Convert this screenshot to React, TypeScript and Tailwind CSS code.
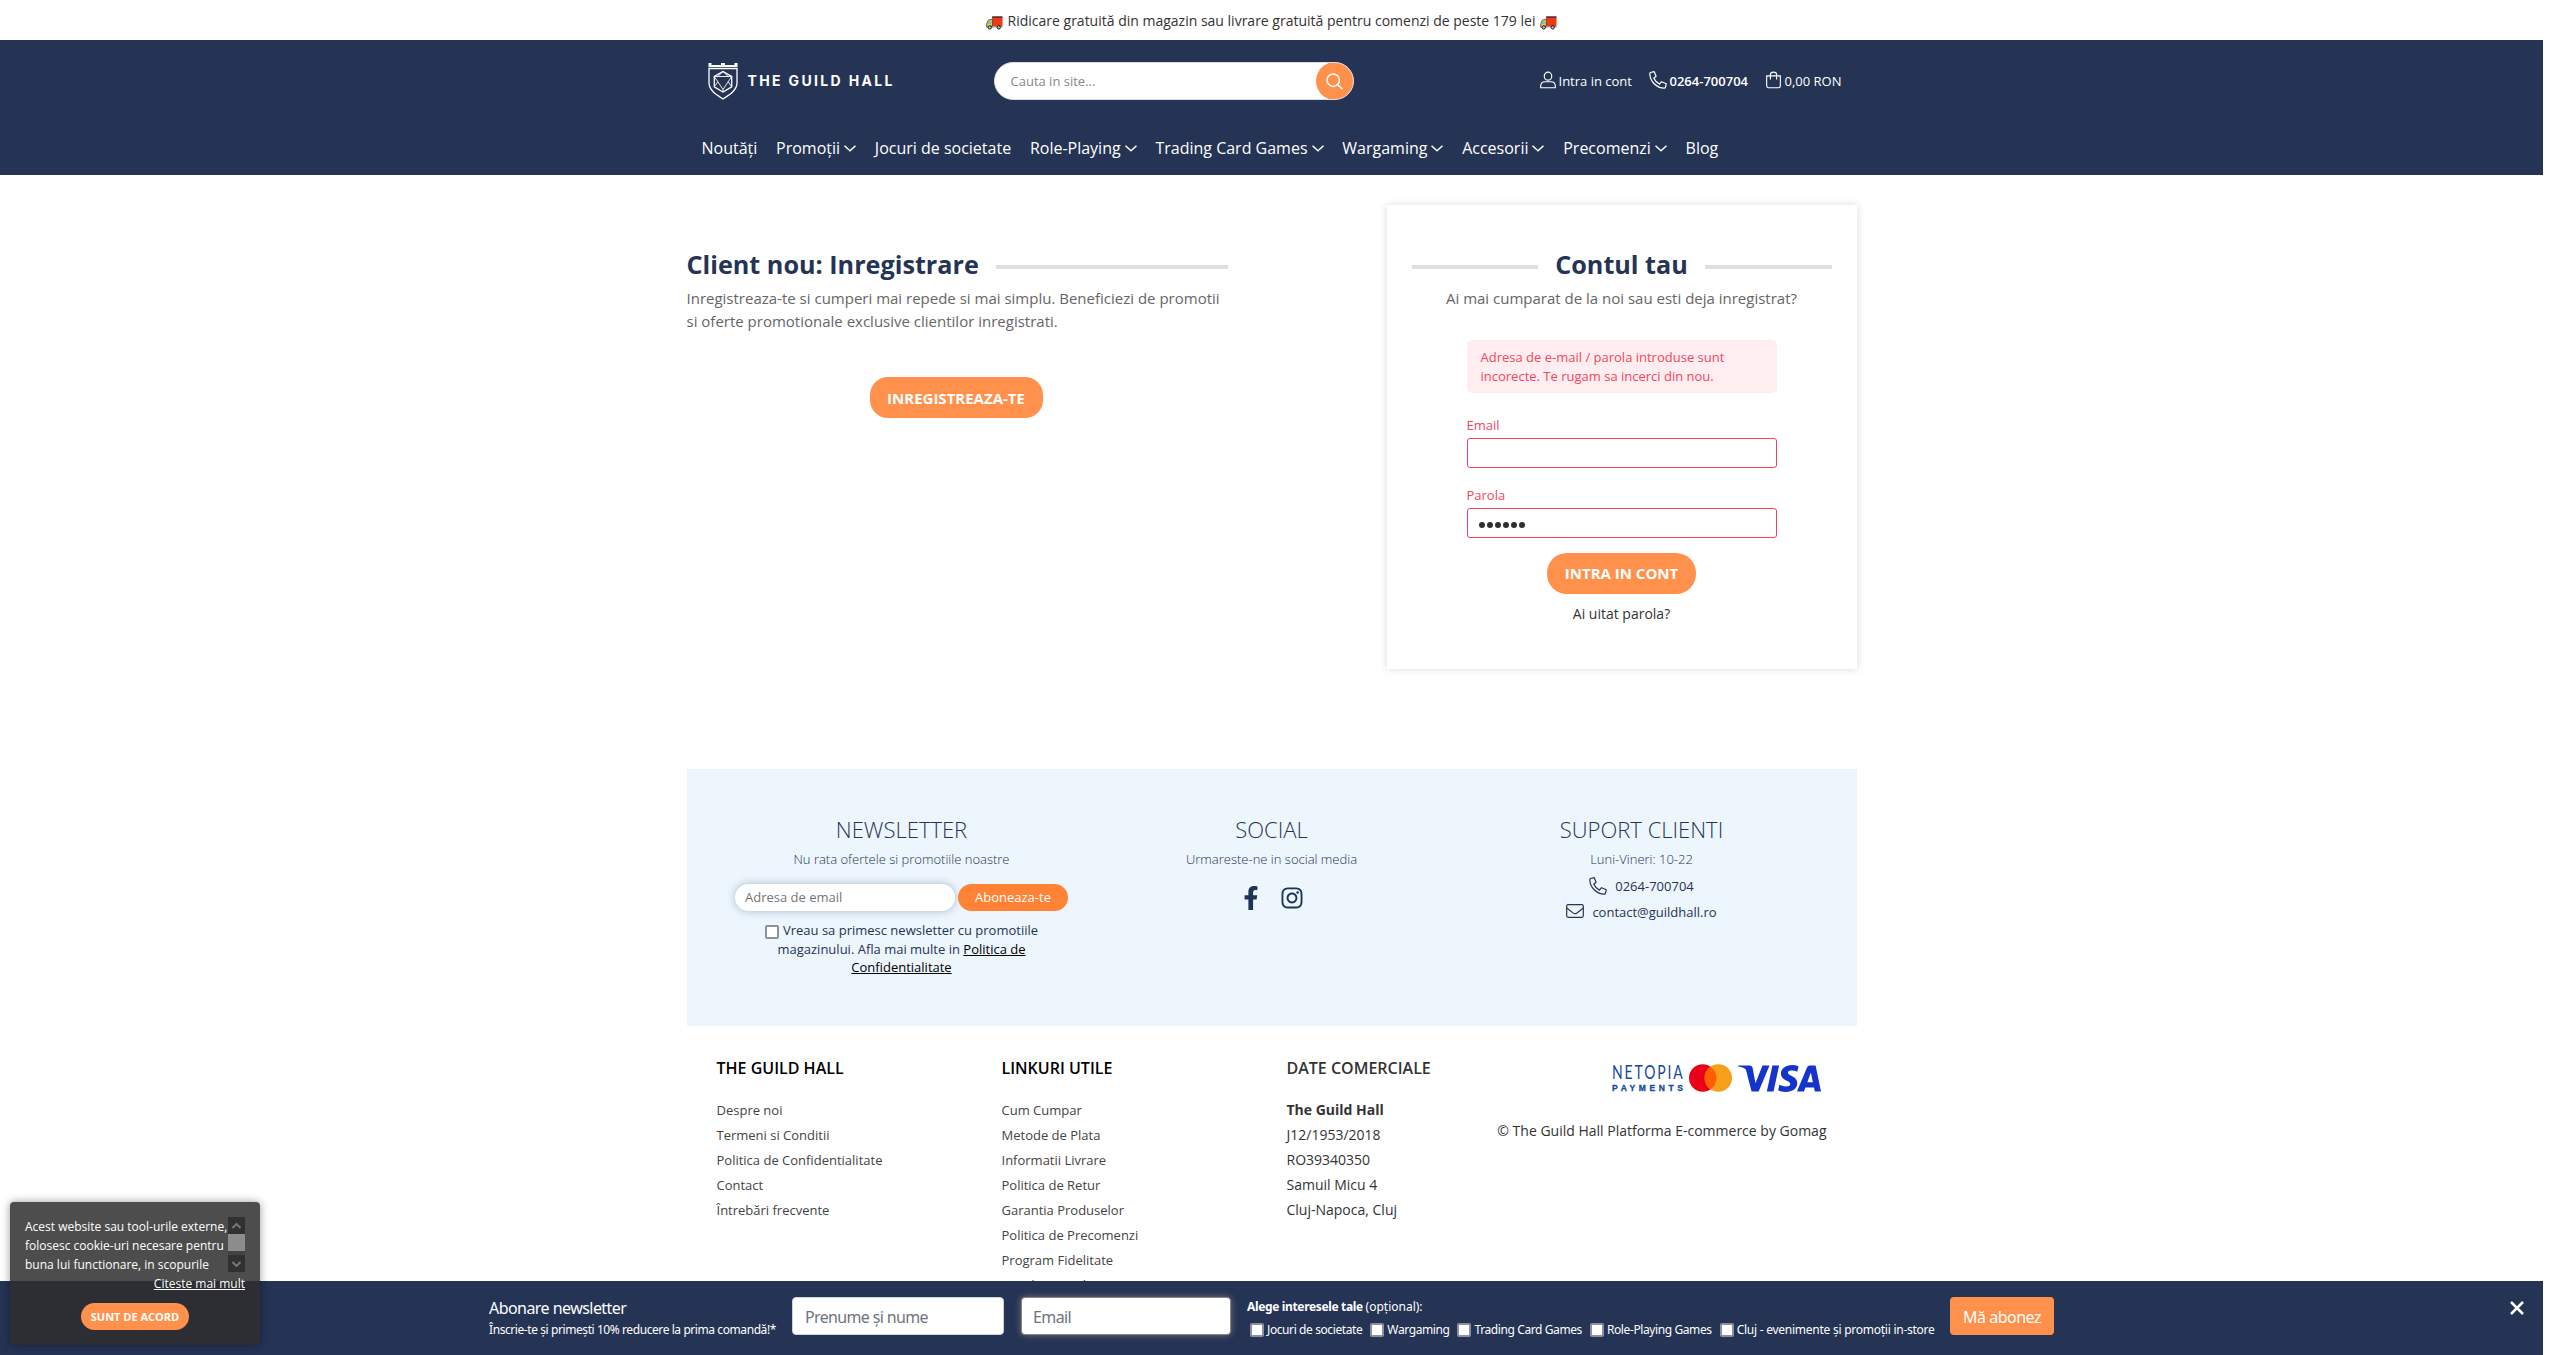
import React from "react";
import { FaFacebookF, FaInstagram } from "react-icons/fa";
import { SiVisa } from "react-icons/si";

const Truck = () => (
  <svg width="17" height="14" viewBox="0 0 18 14" className="mt-1 shrink-0">
    <path d="M6.500 0.600h11v9.900h-11z" fill="#f03a17" />
    <path d="M6.500 0.600h11" stroke="#111" strokeWidth="1.200" />
    <path d="M6 3L2.400 4 0.700 8v3.300h6V3z" fill="#ffc83d" stroke="#222" strokeWidth="0.700" />
    <path d="M4.900 4.300L2.900 5 2 8h2.900z" fill="#3fd0f0" />
    <path d="M1 11h16.500" stroke="#888" strokeWidth="1.200" />
    <circle cx="4" cy="11.600" r="1.800" fill="#bbb" stroke="#111" />
    <circle cx="13.500" cy="11.600" r="1.800" fill="#bbb" stroke="#111" />
  </svg>
);

const Shield = () => (
  <svg width="30" height="37" viewBox="0 0 30 37" fill="none" stroke="#fff" strokeWidth="1.300">
    <path d="M0.500 0h3v2H13V0h4v2h9.500V0h3v4H0.500z" fill="#fff" stroke="none" />
    <path d="M1 5.500h28V20c0 7-7 11.500-14 16C8 31.500 1 27 1 20z" />
    <path d="M15 8.500l8.700 5v10.300L15 29l-8.700-5.200V13.500z" />
    <path d="M6.300 13.500h17.400L15 26.500zM15 8.500l-5.200 5M15 8.500l5.200 5M6.300 23.800l3.500-5M23.700 23.800l-3.500-5M15 26.500V29" strokeWidth="0.900" />
  </svg>
);

const User = () => (
  <svg width="16" height="18" viewBox="0 0 17 18" fill="none" stroke="#fff" strokeWidth="1.200" className="-mt-[3px]">
    <ellipse cx="8.500" cy="4.900" rx="4" ry="4.300" />
    <path d="M0.700 17.200v-1.400c0-3 2-4.900 4.700-4.900h6.200c2.700 0 4.700 1.900 4.700 4.900v1.400z" />
  </svg>
);

const Phone = () => (
  <svg width="18" height="18" viewBox="0 0 18 18" fill="none" stroke="currentColor" strokeWidth="1.200" strokeLinejoin="round" className="-mt-[3px]">
    <path d="M1.500 1.500l3.600-0.900 2 4.700-2.300 2c1.200 2.600 3 4.500 5.700 5.800l2-2.400 4.800 2-0.900 3.700c-0.100 0.500-0.500 0.800-1 0.800C7.600 17.200 0.800 10.300 0.800 2.500c0-0.500 0.300-0.900 0.700-1z" />
  </svg>
);

const Bag = () => (
  <svg width="15" height="18" viewBox="0 0 16 18" fill="none" stroke="#fff" strokeWidth="1.200" className="-mt-[3px]">
    <path d="M0.700 4.600h14.600v10.600c0 1.200-0.900 2.100-2.100 2.100H2.800c-1.200 0-2.100-0.900-2.100-2.100zM4.700 8.500V3.500c0-1.700 1.500-2.900 3.300-2.900s3.300 1.200 3.300 2.900v5" />
  </svg>
);

const Mail = () => (
  <svg width="18" height="14" viewBox="0 0 18 14" fill="none" stroke="currentColor" strokeWidth="1.200" className="-mt-[4px]">
    <rect x="0.700" y="0.700" width="16.600" height="12.600" rx="1.500" />
    <path d="M0.700 4l6.300 4.900c1.200 0.900 2.800 0.900 4 0L17.300 4" />
  </svg>
);

const Search = () => (
  <svg width="17" height="17" viewBox="0 0 17 17" fill="none" stroke="#fff" strokeWidth="1.500">
    <circle cx="7.200" cy="7.200" r="6.200" />
    <path d="M11.600 11.600l4.900 4.600" />
  </svg>
);

const Chevron = () => (
  <svg width="12" height="7" viewBox="0 0 12 7" fill="none" stroke="#fff" strokeWidth="1.500" className="mt-px">
    <path d="M0.500 0.700L6 5.700l5.500-5" />
  </svg>
);

const nav: [string, boolean][] = [
  ["Noutăți", false],
  ["Promoții", true],
  ["Jocuri de societate", false],
  ["Role-Playing", true],
  ["Trading Card Games", true],
  ["Wargaming", true],
  ["Accesorii", true],
  ["Precomenzi", true],
  ["Blog", false],
];

const infoLinks = ["Despre noi", "Termeni si Conditii", "Politica de Confidentialitate", "Contact", "Întrebări frecvente"];
const usefulLinks = ["Cum Cumpar", "Metode de Plata", "Informatii Livrare", "Politica de Retur", "Garantia Produselor", "Politica de Precomenzi", "Program Fidelitate", "Vouchere Cadou"];
const company = ["J12/1953/2018", "RO39340350", "Samuil Micu 4", "Cluj-Napoca, Cluj"];
const interests = ["Jocuri de societate", "Wargaming", "Trading Card Games", "Role-Playing Games", "Cluj - evenimente și promoții in-store"];

function Header() {
  return (
    <header className="h-[135px] bg-[#253355] text-white">
      <div className="mx-auto w-[1170px]">
        <div className="flex h-[83px] items-center">
          <a className="ml-[21px] flex w-[286px] items-center">
            <Shield />
            <span className="-mt-[3px] ml-[10px] whitespace-nowrap font-['Inter'] text-[14px] font-bold tracking-[2.350px]">THE GUILD HALL</span>
          </a>
          <form className="-mt-px flex h-[38px] w-[360px] overflow-hidden rounded-[19px] border border-[#ddd] bg-white">
            <span className="grow pl-[16px] text-[13px] leading-[37px] text-[#888]">Cauta in site...</span>
            <span className="-my-px -mr-px flex h-[38px] w-[38px] items-center justify-center rounded-full bg-[#ff914d]">
              <Search />
            </span>
          </form>
          <div className="ml-[186px] flex grow items-center text-[13px]">
            <User />
            <span className="ml-[3px] w-[90px]">Intra in cont</span>
            <Phone />
            <span className="ml-[3px] w-[96px] font-semibold">0264-700704</span>
            <Bag />
            <span className="ml-[4px]">0,00 RON</span>
          </div>
        </div>
        <nav className="flex h-[50px] items-center gap-[18.750px] pl-[15px] text-[16px]">
          {nav.map(([label, menu]) => (
            <a key={label} className="flex items-center gap-1 whitespace-nowrap">
              {label}
              {menu && <Chevron />}
            </a>
          ))}
        </nav>
      </div>
    </header>
  );
}

function Main() {
  return (
    <main className="mx-auto flex h-[594px] w-[1170px] justify-between pt-[30px]">
      <section className="w-[541px] pt-[43px]">
        <h2 className="flex h-[34px] items-center gap-[17px] whitespace-nowrap text-[25.200px] font-bold text-[#253355]">
          Client nou: Inregistrare
          <span className="mt-[3px] h-1 grow bg-[#dfdfdf]" />
        </h2>
        <p className="mt-[5px] whitespace-nowrap text-[15px] leading-[23px] text-[#666]">
          Inregistreaza-te si cumperi mai repede si mai simplu. Beneficiezi de promotii
          <br />
          si oferte promotionale exclusive clientilor inregistrati.
        </p>
        <button className="ml-[183px] mt-[44px] h-[41px] w-[173px] rounded-[18px] bg-[#ff914d] pt-px text-[15px] font-bold text-white">INREGISTREAZA-TE</button>
      </section>
      <section className="flex h-[464px] w-[470px] flex-col items-center px-[25px] pt-[43px] shadow-[0_0_8px_rgba(0,0,0,0.150)]">
        <h2 className="flex h-[34px] w-full items-center gap-[17px] whitespace-nowrap text-[25.200px] font-bold text-[#253355]">
          <span className="mt-[3px] h-1 grow bg-[#dfdfdf]" />
          Contul tau
          <span className="mt-[3px] h-1 grow bg-[#dfdfdf]" />
        </h2>
        <p className="mt-[5px] text-[15px] leading-[23px] text-[#666]">Ai mai cumparat de la noi sau esti deja inregistrat?</p>
        <div className="mt-[30px] h-[53px] w-[310px] rounded-[5px] bg-[#ffedef] px-[14px] py-[8px] text-[13px] leading-[19px] text-[#f14764]">
          Adresa de e-mail / parola introduse sunt incorecte. Te rugam sa incerci din nou.
        </div>
        <label className="mt-[22px] h-[23px] w-[310px] text-[13px] leading-[20px] text-[#f14764]">Email</label>
        <div className="h-[30px] w-[310px] rounded-[3px] border border-[#ee4460] bg-white" />
        <label className="mt-[17px] h-[23px] w-[310px] text-[13px] leading-[20px] text-[#f14764]">Parola</label>
        <div className="flex h-[30px] w-[310px] items-center gap-[2px] rounded-[3px] border border-[#ee4460] bg-white pl-[11px] pt-[3px]">
          {[0, 1, 2, 3, 4, 5].map((n) => (
            <i key={n} className="h-[6px] w-[6px] rounded-full bg-[#2f2f2f]" />
          ))}
        </div>
        <button className="mt-[15px] h-[41px] w-[149px] rounded-[20px] bg-[#ff914d] text-[15px] font-bold text-white">INTRA IN CONT</button>
        <a className="mt-[10px] text-[14px] leading-5 text-[#333]">Ai uitat parola?</a>
      </section>
    </main>
  );
}

function Panel() {
  return (
    <section className="mx-auto flex h-[257px] w-[1170px] bg-[#edf6fd] pt-[44px] text-center text-[#253355]">
      <div className="ml-[40px] flex w-[350px] flex-col items-center">
        <h3 className="text-[22px] font-light leading-[32px]">NEWSLETTER</h3>
        <p className="mt-[4px] text-[13px] font-light leading-[20px]">Nu rata ofertele si promotiile noastre</p>
        <div className="mt-[15px] flex gap-[3px] text-[13px]">
          <span className="h-[27px] w-[220px] rounded-[14px] bg-white pl-[10px] text-left leading-[26px] text-[#757575] shadow-[0_0_8px_rgba(37,70,100,0.350)]">Adresa de email</span>
          <button className="h-[27px] w-[110px] rounded-[14px] bg-[#ff8235] leading-[27px] text-white">Aboneaza-te</button>
        </div>
        <p className="mt-[10px] whitespace-nowrap text-[13px] leading-[18.600px]">
          <span className="relative top-[4px] mr-1 inline-block h-[14px] w-[14px] rounded-[2px] border-2 border-[#8f8f9d] bg-white" />
          Vreau sa primesc newsletter cu promotiile
          <br />
          magazinului. Afla mai multe in <u className="text-black">Politica de</u>
          <br />
          <u className="text-black">Confidentialitate</u>
        </p>
      </div>
      <div className="ml-[95px] flex w-[200px] flex-col items-center">
        <h3 className="text-[22px] font-light leading-[32px]">SOCIAL</h3>
        <p className="mt-[4px] text-[13px] font-light leading-[20px]">Urmareste-ne in social media</p>
        <div className="mt-[17px] flex items-center gap-[17px] text-[#1c3557]">
          <FaFacebookF size={24} />
          <FaInstagram size={24} />
        </div>
      </div>
      <div className="ml-[170px] flex w-[200px] flex-col items-center">
        <h3 className="text-[22px] font-light leading-[32px]">SUPORT CLIENTI</h3>
        <p className="mt-[4px] text-[13px] font-light leading-[20px]">Luni-Vineri: 10-22</p>
        <div className="mt-[8px] flex h-[20px] items-center gap-[8px] text-[13px]">
          <Phone />
          <span>0264-700704</span>
        </div>
        <div className="mt-[6px] flex h-[20px] items-center gap-[8px] text-[13px]">
          <Mail />
          <span>contact@guildhall.ro</span>
        </div>
      </div>
    </section>
  );
}

function Footer() {
  return (
    <footer className="mx-auto flex h-[255px] w-[1170px] overflow-hidden pl-[30px] pt-[30px]">
      <div className="w-[285px]">
        <h4 className="text-[16px] font-semibold leading-6 text-black">THE GUILD HALL</h4>
        <ul className="mt-[18px] text-[13px] leading-[25px] text-[#444]">
          {infoLinks.map((t) => <li key={t}>{t}</li>)}
        </ul>
      </div>
      <div className="w-[285px]">
        <h4 className="text-[16px] font-semibold leading-6 text-black">LINKURI UTILE</h4>
        <ul className="mt-[18px] text-[13px] leading-[25px] text-[#444]">
          {usefulLinks.map((t) => <li key={t}>{t}</li>)}
        </ul>
      </div>
      <div className="w-[210px]">
        <h4 className="text-[16px] font-semibold leading-6 text-[#333]">DATE COMERCIALE</h4>
        <ul className="mt-[17px] text-[14px] leading-[25px] text-[#333]">
          <li className="font-bold">The Guild Hall</li>
          {company.map((t) => <li key={t}>{t}</li>)}
        </ul>
      </div>
      <div className="w-[330px]">
        <div className="flex h-[44px] items-center justify-end pr-[6px]">
          <svg width="72" height="28" viewBox="0 0 72 28" fill="#164a9c" className="overflow-visible">
            <g transform="scale(0.700 1)">
              <text x="0" y="15" fontFamily="Lato" fontSize="20" fontWeight="400" textLength="101">NETOPIA</text>
            </g>
            <text x="0" y="27" fontFamily="Liberation Sans" fontSize="8.500" fontWeight="700" stroke="#164a9c" strokeWidth="0.300" textLength="71">PAYMENTS</text>
          </svg>
          <svg width="43" height="28" viewBox="0 0 43 28" className="ml-[5px]">
            <circle cx="13.700" cy="14" r="13.700" fill="#eb001b" />
            <circle cx="29.300" cy="14" r="13.700" fill="#f79e1b" />
            <path d="M21.500 2.700a13.700 13.700 0 0 1 0 22.600a13.700 13.700 0 0 1 0-22.600z" fill="#ff5f00" />
          </svg>
          <SiVisa size={83} color="#1434cb" className="-my-7 ml-[6px]" />
        </div>
        <p className="mt-[19px] whitespace-nowrap text-right text-[14px] leading-6 text-[#333]">© The Guild Hall Platforma E-commerce by Gomag</p>
      </div>
    </footer>
  );
}

function SubscribeBar() {
  return (
    <div className="flex h-[74px] w-[2543px] bg-[#253355] pl-[489px] font-['Noto_Sans'] text-white">
      <div className="w-[303px] whitespace-nowrap pt-[15px]">
        <div className="text-[16px] leading-[24px] tracking-[-0.550px]">Abonare newsletter</div>
        <div className="text-[12px] leading-[20px] tracking-[-0.420px]">Înscrie-te și primești 10% reducere la prima comandă!*</div>
      </div>
      <div className="mt-[16px] h-[38px] w-[212px] rounded border border-[#ced4da] bg-white pl-[12px] text-[16px] leading-[39px] tracking-[-0.650px] text-[#6c757d]">Prenume și nume</div>
      <div className="ml-[17px] mt-[16px] h-[38px] w-[210px] rounded border border-[#888] bg-white pl-[11px] text-[16px] leading-[39px] tracking-[-0.600px] text-[#6c757d] shadow-[0_0_7px_rgba(200,180,150,0.500)]">Email</div>
      <div className="ml-[16px] w-[703px] whitespace-nowrap pt-[15px] text-[12px] tracking-[-0.350px]">
        <div className="leading-[22px]"><b>Alege interesele tale</b> <span className="tracking-normal">(opțional):</span></div>
        <div className="flex items-center gap-[8px] pl-[3px] leading-[24px]">
          {interests.map((t, i) => (
            <span key={t} className={i === 4 ? "flex items-center gap-[3px] tracking-[-0.250px]" : "flex items-center gap-[3px] tracking-[-0.400px]"}>
              <i className="h-[14px] w-[14px] rounded-[2px] border-2 border-[#8f8f9d] bg-white" />
              {t}
            </span>
          ))}
        </div>
      </div>
      <button className="mt-[16px] h-[38px] w-[104px] rounded bg-[#ff914d] text-[16px] leading-[40px] tracking-[-0.500px]">Mă abonez</button>
      <svg width="14" height="14" viewBox="0 0 14 14" stroke="#fff" strokeWidth="2.500" className="ml-auto mr-[19px] mt-[20px]">
        <path d="M1 1l12 12M13 1L1 13" />
      </svg>
    </div>
  );
}

function CookieNotice() {
  return (
    <aside className="absolute left-[10px] top-[1202px] h-[143px] w-[250px] rounded bg-[rgba(46,46,46,0.850)] p-[15px] text-[12px] text-white shadow-[0_0_8px_rgba(0,0,0,0.400)]">
      <div className="flex h-[55px] justify-between">
        <p className="w-[204px] whitespace-nowrap leading-[19px]">
          Acest website sau tool-urile externe,
          <br />
          folosesc cookie-uri necesare pentru
          <br />
          buna lui functionare, in scopurile
        </p>
        <div className="flex w-[17px] flex-col bg-[#424242]">
          <span className="flex h-[17px] items-center justify-center bg-[#303133]">
            <svg width="9" height="6" viewBox="0 0 9 6" fill="none" stroke="#777" strokeWidth="2"><path d="M0.500 5l4-4 4 4" /></svg>
          </span>
          <span className="h-[17px] bg-[#8c8c8c]" />
          <span className="mt-auto flex h-[17px] items-center justify-center bg-[#303133]">
            <svg width="9" height="6" viewBox="0 0 9 6" fill="none" stroke="#777" strokeWidth="2"><path d="M0.500 1l4 4 4-4" /></svg>
          </span>
        </div>
      </div>
      <div className="mt-[2px] text-right leading-[19px]"><u>Citeste mai mult</u></div>
      <button className="ml-[56px] mt-[10px] block h-[27px] w-[108px] rounded-[14px] bg-[#ff914d] pt-px text-[11px] font-bold">SUNT DE ACORD</button>
    </aside>
  );
}

export default function App() {
  return (
    <div className="relative h-[1355px] w-full overflow-hidden bg-white font-['Open_Sans',sans-serif]">
      <div className="w-[2543px]">
        <div className="flex h-10 items-center justify-center gap-[5px] pt-px text-[14px] text-[#333]">
          <Truck />
          Ridicare gratuită din magazin sau livrare gratuită pentru comenzi de peste 179 lei
          <Truck />
        </div>
        <Header />
        <Main />
        <Panel />
        <Footer />
        <SubscribeBar />
      </div>
      <CookieNotice />
    </div>
  );
}
